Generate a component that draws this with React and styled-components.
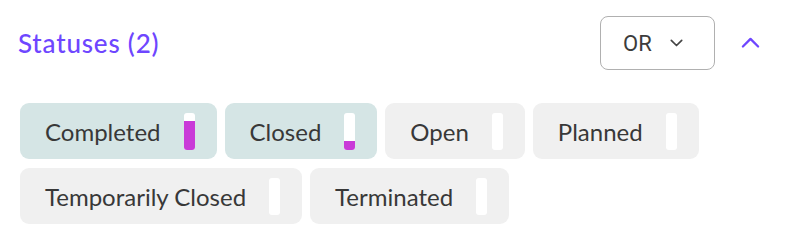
import React, { useState } from 'react';
import styled, { createGlobalStyle } from 'styled-components';

const GlobalStyle = createGlobalStyle`
  body {
    margin: 0;
    background: #ffffff;
    font-family: Lato, "Noto Sans", sans-serif;
  }
`;

const STATUSES = [
  { name: 'Completed', fill: 78, selected: true },
  { name: 'Closed', fill: 22, selected: true },
  { name: 'Open', fill: 0, selected: false },
  { name: 'Planned', fill: 0, selected: false },
  { name: 'Temporarily Closed', fill: 0, selected: false },
  { name: 'Terminated', fill: 0, selected: false },
];

const Panel = styled.section`
  display: flex;
  flex-direction: column;
  padding: 16px 36px 0 20px;
`;

const Header = styled.header`
  display: flex;
  align-items: center;
  justify-content: space-between;
  height: 54px;
  margin-bottom: 33px;
`;

const Title = styled.h2`
  margin: 0 0 0 -2px;
  font-size: 26px;
  font-weight: 500;
  letter-spacing: 0.8px;
  color: #6e46ff;
`;

const Controls = styled.div`
  display: flex;
  align-items: center;
  gap: 20px;
`;

const OperatorSelect = styled.button`
  display: flex;
  align-items: center;
  gap: 18px;
  box-sizing: border-box;
  width: 115px;
  height: 54px;
  padding: 0 0 0 22px;
  border: 1.5px solid #b0b0b0;
  border-radius: 8px;
  background: #ffffff;
  font-family: Roboto, sans-serif;
  font-size: 22px;
  color: #3c3c3c;
  cursor: pointer;
`;

const ToggleButton = styled.button`
  display: flex;
  align-items: center;
  justify-content: center;
  width: 30px;
  height: 30px;
  padding: 0;
  border: none;
  background: none;
  cursor: pointer;
`;

const ChipList = styled.div`
  display: flex;
  flex-wrap: wrap;
  gap: 9px 8px;
`;

const Chip = styled.button`
  display: flex;
  align-items: center;
  gap: 23px;
  box-sizing: border-box;
  height: 56px;
  padding: 0 22px 0 25px;
  border: none;
  border-radius: 9px;
  background: ${({ $selected }) => ($selected ? '#d5e5e5' : '#f0f0f0')};
  font-family: inherit;
  font-size: 24px;
  color: #383838;
  cursor: pointer;
`;

const Meter = styled.span`
  position: relative;
  display: block;
  width: 11px;
  height: 37px;
  border-radius: 3px;
  background: #ffffff;
  overflow: hidden;
`;

const MeterFill = styled.span`
  position: absolute;
  left: 0;
  right: 0;
  bottom: 0;
  background: #c93ad8;
`;

const Chevron = ({ up, color, size, width }) => (
  <svg width={size} height={size * 0.6} viewBox="0 0 20 12" fill="none">
    <path
      d={up ? 'M2 10 L10 2 L18 10' : 'M2 2 L10 10 L18 2'}
      stroke={color}
      strokeWidth={width}
      strokeLinecap="round"
      strokeLinejoin="round"
    />
  </svg>
);

export default function App() {
  const [items] = useState(STATUSES);
  const count = items.filter((s) => s.selected).length;

  return (
    <>
      <GlobalStyle />
      <Panel>
        <Header>
          <Title>Statuses ({count})</Title>
          <Controls>
            <OperatorSelect>
              OR
              <Chevron color="#444" size={13} width={2.6} />
            </OperatorSelect>
            <ToggleButton>
              <Chevron up color="#6e46ff" size={19} width={2.4} />
            </ToggleButton>
          </Controls>
        </Header>
        <ChipList>
          {items.map((s) => (
            <Chip key={s.name} $selected={s.selected}>
              {s.name}
              <Meter>
                <MeterFill style={{ height: `${s.fill}%` }} />
              </Meter>
            </Chip>
          ))}
        </ChipList>
      </Panel>
    </>
  );
}
